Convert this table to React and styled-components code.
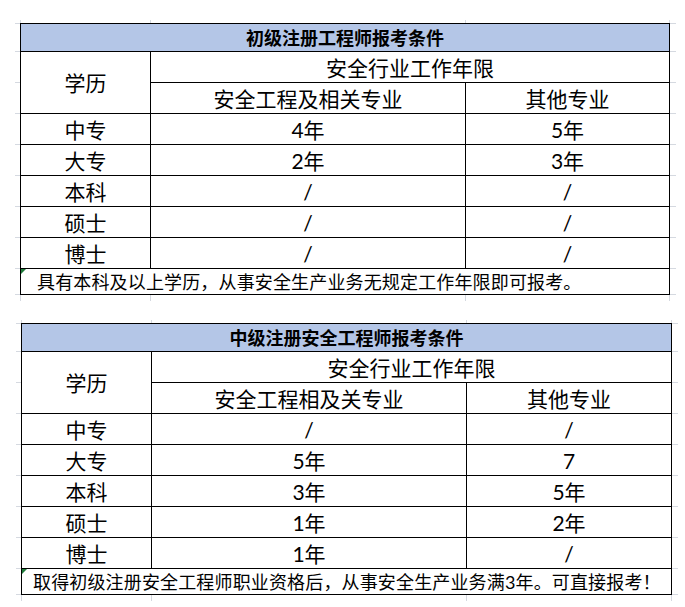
import React from "react";
import styled, { createGlobalStyle } from "styled-components";

const FAINT = "#d5d9e0";

const GlobalStyle = createGlobalStyle`
  html, body {
    margin: 0;
    padding: 0;
    background: #ffffff;
  }
  body {
    font-family: Lato, "Noto Sans CJK SC", sans-serif;
    color: #000000;
  }
`;

const Page = styled.div`
  display: flex;
  flex-direction: column;
  padding-top: 20px;
`;

const Sheet = styled.div`
  display: flex;
  flex-direction: column;
  margin-left: ${(p) => p.$left}px;
  margin-bottom: ${(p) => p.$gap || 0}px;
`;

const columns = (p) => `5px 131px 315px ${p.$last}px 6px`;

const Ticks = styled.div`
  display: grid;
  grid-template-columns: ${columns};
  height: ${(p) => p.$h}px;
`;

const Tick = styled.div`
  box-sizing: border-box;
  border-right: ${(p) => (p.$on ? `1px solid ${FAINT}` : "none")};
  border-left: ${(p) => (p.$first ? `1px solid ${FAINT}` : "none")};
`;

const Grid = styled.div`
  display: grid;
  grid-template-columns: ${columns};
  grid-template-rows: 29px repeat(7, 31px) 26px;
`;

const Stub = styled.div`
  box-sizing: border-box;
  border-top: ${(p) => (p.$top ? `1px solid ${FAINT}` : "none")};
  border-bottom: 1px solid ${FAINT};
`;

const Cell = styled.div`
  box-sizing: border-box;
  display: flex;
  align-items: center;
  justify-content: center;
  border-right: 1px solid #000;
  border-bottom: 1px solid #000;
  border-left: ${(p) => (p.$first ? "1px solid #000" : "none")};
  grid-column: span ${(p) => p.$cols || 1};
  grid-row: span ${(p) => p.$rows || 1};
  font-size: 21px;
  line-height: 1;
  white-space: nowrap;
`;

const Title = styled(Cell)`
  border-top: 1px solid #000;
  background: #b4c6e7;
  font-size: 18px;
  font-weight: 700;
`;

const Note = styled(Cell)`
  position: relative;
  justify-content: flex-start;
  padding-left: ${(p) => p.$indent}px;
  font-size: 18px;
  letter-spacing: 0.15px;

  &::before {
    content: "";
    position: absolute;
    top: 0;
    left: 0;
    border-top: 5px solid #1f7a3a;
    border-right: 5px solid transparent;
  }
`;

const TickRow = ({ last, h }) => (
  <Ticks $last={last} $h={h}>
    <Tick />
    <Tick $first $on />
    <Tick $on />
    <Tick $on />
    <Tick />
  </Ticks>
);

const ExamTable = ({ left, last, gap, title, major, rows, note, indent }) => (
  <Sheet $left={left} $gap={gap}>
    <TickRow last={last} h={3} />
    <Grid $last={last}>
      <Stub $top />
      <Title $first $cols={3}>{title}</Title>
      <Stub $top />

      <Stub />
      <Cell $first $rows={2}>学历</Cell>
      <Cell $cols={2}>安全行业工作年限</Cell>
      <Stub />

      <Stub />
      <Cell>{major}</Cell>
      <Cell>其他专业</Cell>
      <Stub />

      {rows.map(([edu, a, b]) => (
        <React.Fragment key={edu}>
          <Stub />
          <Cell $first>{edu}</Cell>
          <Cell>{a}</Cell>
          <Cell>{b}</Cell>
          <Stub />
        </React.Fragment>
      ))}

      <Stub />
      <Note $first $cols={3} $indent={indent}>{note}</Note>
      <Stub />
    </Grid>
    <TickRow last={last} h={6} />
  </Sheet>
);

const junior = [
  ["中专", "4年", "5年"],
  ["大专", "2年", "3年"],
  ["本科", "/", "/"],
  ["硕士", "/", "/"],
  ["博士", "/", "/"],
];

const middle = [
  ["中专", "/", "/"],
  ["大专", "5年", "7"],
  ["本科", "3年", "5年"],
  ["硕士", "1年", "2年"],
  ["博士", "1年", "/"],
];

export default function App() {
  return (
    <>
      <GlobalStyle />
      <Page>
        <ExamTable
          left={15}
          last={204}
          gap={19}
          title="初级注册工程师报考条件"
          major="安全工程及相关专业"
          rows={junior}
          indent={16}
          note="具有本科及以上学历，从事安全生产业务无规定工作年限即可报考。"
        />
        <ExamTable
          left={16}
          last={205}
          title="中级注册安全工程师报考条件"
          major="安全工程相及关专业"
          rows={middle}
          indent={11}
          note="取得初级注册安全工程师职业资格后，从事安全生产业务满3年。可直接报考！"
        />
      </Page>
    </>
  );
}
